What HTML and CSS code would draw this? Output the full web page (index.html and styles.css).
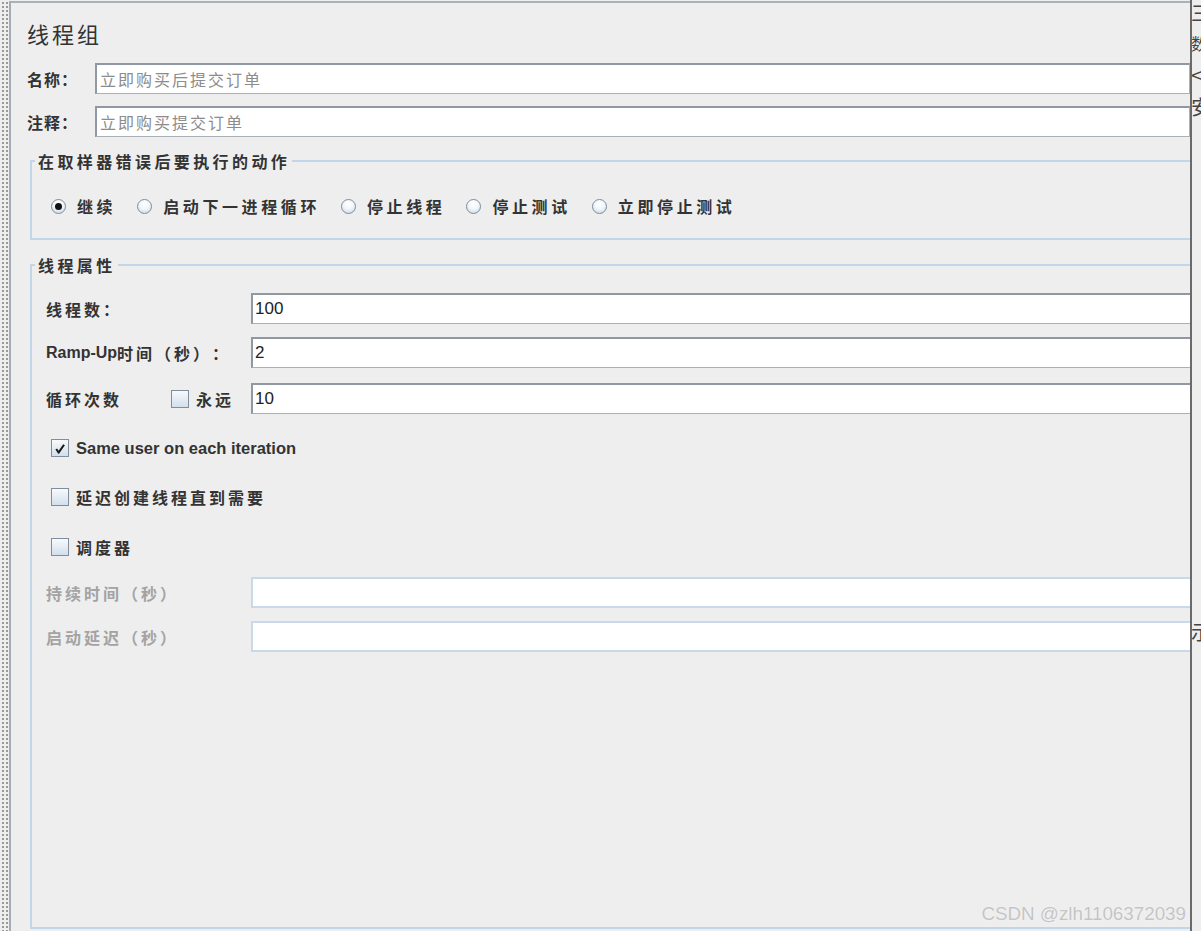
FILE: index.html
```html
<!DOCTYPE html>
<html lang="zh">
<head>
<meta charset="utf-8">
<title>线程组</title>
<link rel="stylesheet" href="styles.css">
</head>
<body>
<div class="app">
  <div class="divider"></div>
  <main class="panel">
    <h1 class="title">线程组</h1>
    <div class="row name-row">
      <label class="lbl-short">名称：</label>
      <div class="field"><span class="ph">立即购买后提交订单</span></div>
    </div>
    <div class="row comment-row">
      <label class="lbl-short">注释：</label>
      <div class="field"><span class="ph">立即购买提交订单</span></div>
    </div>

    <fieldset class="group group-action">
      <legend>在取样器错误后要执行的动作</legend>
      <div class="radios">
        <span class="radio checked"></span><span class="opt">继续</span>
        <span class="radio"></span><span class="opt">启动下一进程循环</span>
        <span class="radio"></span><span class="opt">停止线程</span>
        <span class="radio"></span><span class="opt">停止测试</span>
        <span class="radio"></span><span class="opt">立即停止测试</span>
      </div>
    </fieldset>

    <fieldset class="group group-props">
      <legend>线程属性</legend>
      <div class="prow first">
        <span class="plabel">线程数：</span>
        <div class="field num">100</div>
      </div>
      <div class="prow second">
        <span class="plabel"><b class="latin">Ramp-Up</b>时间（秒）：</span>
        <div class="field num">2</div>
      </div>
      <div class="prow third">
        <span class="plabel loop"><span class="loop-text">循环次数</span><span class="check"></span><span class="forever">永远</span></span>
        <div class="field num">10</div>
      </div>
      <div class="crow c1"><span class="check checked"><svg viewBox="0 0 17 17" width="17" height="17"><path d="M4.5 9 L7 12.8 L12.8 4.5" fill="none" stroke="#1a1a1a" stroke-width="2.2" stroke-linejoin="round"/></svg></span><span class="ctext latin">Same user on each iteration</span></div>
      <div class="crow c2"><span class="check"></span><span class="ctext">延迟创建线程直到需要</span></div>
      <div class="crow c3"><span class="check"></span><span class="ctext">调度器</span></div>
      <div class="prow dis first-dis">
        <span class="plabel">持续时间（秒）</span>
        <div class="field disabled"></div>
      </div>
      <div class="prow dis">
        <span class="plabel">启动延迟（秒）</span>
        <div class="field disabled"></div>
      </div>
    </fieldset>
    <div class="watermark">CSDN @zlh1106372039</div>
  </main>
  <aside class="side">
    <div class="frag f1">三</div>
    <div class="frag f2">数</div>
    <div class="frag f3">&lt;</div>
    <div class="frag f4">安</div>
    <div class="frag f5">示</div>
  </aside>
</div>
</body>
</html>
```
FILE: styles.css
```css
* { box-sizing: border-box; }
html, body {
  margin: 0;
  padding: 0;
  background: #eeeeee;
}
body {
  width: 1201px;
  height: 931px;
  overflow: hidden;
  font-family: "Noto Sans CJK SC", "Liberation Sans", sans-serif;
  color: #333333;
  text-spacing-trim: space-all;
}
.app {
  display: flex;
  height: 931px;
}
.divider {
  width: 9px;
  flex: none;
  background-color: #eeeeee;
  background-image: radial-gradient(circle, #9a9a9a 0.8px, transparent 1.1px);
  background-size: 4px 4px;
  background-position: 1px 1px;
}
.panel {
  position: relative;
  flex: 1;
  min-width: 0;
  border-left: 2px solid #a4acb6;
  border-top: 2px solid #aab1b9;
  margin-top: 1px;
  overflow: hidden;
  padding-left: 16px;
}
.title {
  margin: 15px 0 0 0;
  font-size: 22px;
  font-weight: normal;
  letter-spacing: 3px;
  line-height: 30px;
  height: 30px;
  color: #333;
}
.row {
  display: flex;
  align-items: center;
  height: 31px;
}
.name-row { margin-top: 15px; }
.comment-row { margin-top: 12px; }
.lbl-short {
  width: 68px;
  font-size: 16px;
  font-weight: bold;
  letter-spacing: 1px;
  color: #333;
}
.field {
  flex: 1;
  height: 31px;
  background: #ffffff;
  border: 1px solid #a9b0b8;
  border-top: 2px solid #8f98a3;
  border-left: 2px solid #8f98a3;
  display: flex;
  align-items: center;
  padding-left: 3px;
}
.ph {
  font-size: 16px;
  color: #8c8c8c;
  letter-spacing: 2px;
}
.num {
  font-family: "Liberation Sans", sans-serif;
  font-size: 17px;
  color: #222;
  padding-left: 2px;
}
.group {
  margin: 0 -20px 0 3px;
  border: 2px solid #c3d5e8;
  padding: 0 0 0 14px;
  min-width: 0;
}
.group legend {
  font-size: 16px;
  font-weight: bold;
  letter-spacing: 3.4px;
  padding: 0 2px 0 3px;
  margin-left: -11px;
  line-height: 22px;
  color: #333;
}
.group-action {
  margin-top: 13px;
  height: 90px;
}
.radios {
  display: flex;
  align-items: center;
  margin-top: 22px;
  padding-left: 5px;
}
.radio {
  width: 15px;
  height: 15px;
  border-radius: 50%;
  border: 1px solid #7f8d9c;
  background: radial-gradient(circle at 50% 30%, #ffffff 0%, #f2f6fa 45%, #c4d4e4 100%);
  flex: none;
  display: inline-flex;
  align-items: center;
  justify-content: center;
  margin-right: 11px;
}
.radio.checked::after {
  content: "";
  width: 7px;
  height: 7px;
  border-radius: 50%;
  background: #111;
}
.opt {
  font-size: 16px;
  font-weight: bold;
  letter-spacing: 3.6px;
  margin-right: 21px;
  color: #333;
}
.group-props {
  margin-top: 14px;
  height: 675px;
}
.prow {
  display: flex;
  align-items: center;
  height: 31px;
  margin-top: 13px;
}
.prow.first { margin-top: 17px; }
.prow.second { margin-top: 13px; }
.prow.third { margin-top: 15px; }
.plabel {
  width: 205px;
  flex: none;
  font-size: 16px;
  font-weight: bold;
  letter-spacing: 3px;
  color: #333;
  display: flex;
  align-items: center;
  white-space: nowrap;
}
.latin {
  font-family: "Liberation Sans", sans-serif;
  font-weight: bold;
  letter-spacing: 0;
  font-size: 16px;
}
.loop-text { width: 125px; }
.check {
  width: 18px;
  height: 18px;
  flex: none;
  border: 1px solid #7f8d9c;
  background: linear-gradient(#f8fafc, #d2dfec);
  display: inline-flex;
  align-items: center;
  justify-content: center;
}
.check svg { display: block; }
.forever { margin-left: 7px; }
.crow {
  display: flex;
  align-items: center;
  height: 20px;
  padding-left: 5px;
}
.crow .check { margin-right: 7px; }
.c1 { margin-top: 24px; }
.c2 { margin-top: 29px; }
.c3 { margin-top: 30px; }
.ctext {
  font-size: 16px;
  font-weight: bold;
  letter-spacing: 3px;
  color: #333;
}
.ctext.latin { letter-spacing: 0; font-size: 16.5px; }
.dis .plabel { color: #a3a3a3; }
.first-dis { margin-top: 20px; }
.field.disabled {
  border: 2px solid #c9d9ea;
  border-right: none;
}
.dis + .dis { margin-top: 13px; }
.watermark {
  position: absolute;
  right: 4px;
  bottom: 6px;
  font-family: "Liberation Sans", sans-serif;
  font-size: 18.8px;
  color: #c4c4c4;
  text-shadow: 0 0 1px #ffffff;
}
.side {
  width: 11px;
  flex: none;
  border-left: 2px solid #6a6a6a;
  overflow: hidden;
  background: #eeeeee;
  font-size: 20px;
  color: #444;
  line-height: 20px;
}
.frag { white-space: nowrap; margin-left: -1px; }
.f1 { margin-top: 3px; }
.f2 { margin-top: 10px; font-size: 16px; }
.f3 { margin-top: 12px; }
.f4 { margin-top: 12px; }
.f5 { margin-top: 505px; }
```
